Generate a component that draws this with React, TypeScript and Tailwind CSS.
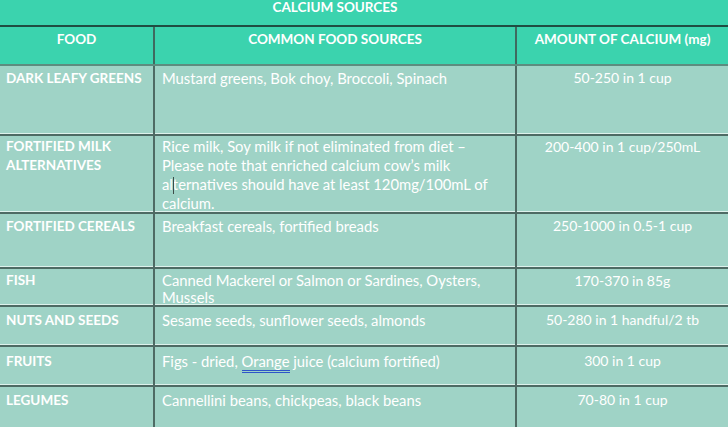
import React from "react";

interface Row {
  food: string[];
  sources: React.ReactNode;
  amount: string;
  h: string;
  text: string;
}

// text cursor left in the middle of "alternatives"
const Cursor = () => (
  <span className="relative inline-block w-0">
    <span className="absolute bottom-[-4px] left-0 h-[17px] w-px bg-[#3d4d49]" />
  </span>
);

const rows: Row[] = [
  {
    food: ["DARK LEAFY GREENS"],
    sources: "Mustard greens, Bok choy, Broccoli, Spinach",
    amount: "50-250 in 1 cup",
    h: "h-[70px]",
    text: "leading-[20px] pt-[2px]",
  },
  {
    food: ["FORTIFIED MILK", "ALTERNATIVES"],
    sources: (
      <>
        Rice milk, Soy milk if not eliminated from diet –<br />
        Please note that enriched calcium cow’s milk
        <br />
        al
        <Cursor />
        ternatives should have at least 120mg/100mL of
        <br />
        calcium.
      </>
    ),
    amount: "200-400 in 1 cup/250mL",
    h: "h-[78px]",
    text: "leading-[19px] pt-[1px]",
  },
  {
    food: ["FORTIFIED CEREALS"],
    sources: "Breakfast cereals, fortified breads",
    amount: "250-1000 in 0.5-1 cup",
    h: "h-[55px]",
    text: "leading-[20px] pt-[2px]",
  },
  {
    food: ["FISH"],
    sources: (
      <>
        Canned Mackerel or Salmon or Sardines, Oysters,
        <br />
        Mussels
      </>
    ),
    amount: "170-370 in 85g",
    h: "h-[38px]",
    text: "leading-[17px] pt-[3px]",
  },
  {
    food: ["NUTS AND SEEDS"],
    sources: "Sesame seeds, sunflower seeds, almonds",
    amount: "50-280 in 1 handful/2 tb",
    h: "h-[40px]",
    text: "leading-[20px] pt-[3px]",
  },
  {
    food: ["FRUITS"],
    sources: (
      <>
        Figs - dried,{" "}
        <span className="border-b-[3px] border-double border-[#2f55c9] leading-[15px]">Orange</span> juice
        (calcium fortified)
      </>
    ),
    amount: "300 in 1 cup",
    h: "h-[40px]",
    text: "leading-[20px] pt-[4px]",
  },
  {
    food: ["LEGUMES"],
    sources: "Cannellini beans, chickpeas, black beans",
    amount: "70-80 in 1 cup",
    h: "h-[50px]",
    text: "leading-[20px] pt-[3px]",
  },
];

export default function App() {
  return (
    <div
      className="h-[427px] w-[728px] overflow-hidden bg-[#9fd3c6] text-[13.5px] text-white"
      style={{ fontFamily: "Lato, 'Open Sans', sans-serif" }}
    >
      {/* title */}
      <div className="h-[27px] border-b-2 border-[#1f4d42] bg-[#3bd3ae]">
        <div className="w-[670px] text-center font-bold leading-[14px]">CALCIUM SOURCES</div>
      </div>

      {/* header */}
      <div className="flex h-[39px] border-b-2 border-[#5d8c7f] bg-[#3bd3ae] font-bold">
        <div className="w-[155px] border-r-2 border-[#3f6a5f] pt-[2px] text-center leading-[20px]">FOOD</div>
        <div className="w-[362px] border-r-2 border-[#3f6a5f] pt-[2px] text-center leading-[20px]">
          COMMON FOOD SOURCES
        </div>
        <div className="flex-1 pt-[2px] text-center leading-[20px]">AMOUNT OF CALCIUM (mg)</div>
      </div>

      {rows.map((r, i) => (
        <div
          key={i}
          className={`flex ${r.h} border-b-2 border-[#4e6b64] shadow-[inset_0_-1px_0_#def2ec]`}
        >
          <div className={`w-[155px] border-r-2 border-[#4e6b64] pl-[6px] font-bold ${r.text}`}>
            {r.food.map((f) => (
              <div key={f}>{f}</div>
            ))}
          </div>
          <div className={`w-[362px] border-r-2 border-[#4e6b64] pl-[7px] text-[14.8px] ${r.text}`}>
            {r.sources}
          </div>
          <div className={`flex-1 text-center text-[14px] ${r.text}`}>{r.amount}</div>
        </div>
      ))}
    </div>
  );
}
